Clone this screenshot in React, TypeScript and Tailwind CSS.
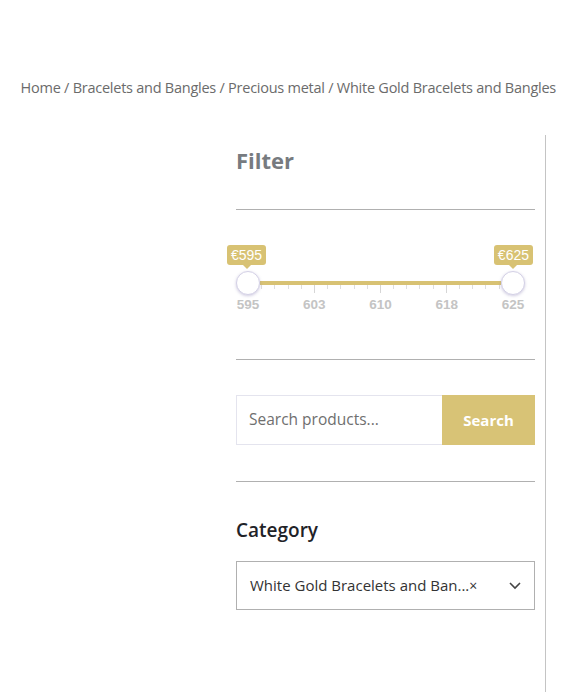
import React from 'react';

const ticks = Array.from({ length: 21 }, (_, i) => i);
const labels = ['595', '603', '610', '618', '625'];

const PriceTip: React.FC<{ value: string }> = ({ value }) => (
  <div className="flex flex-col items-center">
    <div className="bg-[#d8c273] text-white text-[14px] leading-[20px] px-[4px] rounded-[3px]">{value}</div>
    <div className="w-0 h-0 border-l-[4px] border-r-[4px] border-t-[4px] border-l-transparent border-r-transparent border-t-[#d8c273]" />
  </div>
);

const Handle = () => (
  <div className="relative z-10 w-[24px] h-[24px] shrink-0 rounded-full bg-white border border-[#d4d1e6] shadow-[0_1px_3px_rgba(120,110,170,0.35)]" />
);

const App: React.FC = () => {
  return (
    <div className="w-full h-[692px] bg-white overflow-hidden font-['Open_Sans',sans-serif]">
      <div className="pt-[77px] pr-[11px] text-right text-[14.5px] text-[#6b6b6b] tracking-[-0.25px]">
        Home / Bracelets and Bangles / Precious metal / White Gold Bracelets and Bangles
      </div>

      <div className="flex pl-[236px] mt-[36px]">
        <aside className="w-[310px] h-[560px] border-r border-[#c4c4c4] pr-[10px]">
          <h2 className="pt-[10px] text-[22px] font-bold text-[#777b80] leading-[30px]">Filter</h2>
          <div className="mt-[34px] border-t border-[#b0b0b0]" />

          {/* price slider */}
          <div className="mt-[35px] font-['Liberation_Sans',sans-serif]">
            <div className="flex justify-between -ml-[9px] mr-[2px]">
              <PriceTip value="€595" />
              <PriceTip value="€625" />
            </div>
            <div className="mt-[2px] flex items-center w-[289px]">
              <Handle />
              <div className="flex-1 h-[4px] bg-[#d8c273]" />
              <Handle />
            </div>
            <div className="-mt-[10px] mx-[12px] w-[265px] h-[8px] flex justify-between items-start">
              {ticks.map((i) => (
                <div key={i} className={`w-px ${i % 5 === 0 ? 'h-[8px] bg-[#d6d6d6]' : 'h-[4px] bg-[#dedede]'}`} />
              ))}
            </div>
            <div className="mt-[4px] w-[289px] flex justify-between">
              {labels.map((l) => (
                <div key={l} className="w-[24px] text-center text-[13.5px] leading-[16px] font-bold text-[#c4c4c4]">
                  {l}
                </div>
              ))}
            </div>
          </div>

          <div className="mt-[46px] border-t border-[#b0b0b0]" />

          <div className="mt-[35px] flex h-[50px]">
            <div className="flex-1 flex items-center border border-[#e4e4ee] border-r-0 px-[12px] text-[15.5px] text-[#6f6f6f]">
              Search products...
            </div>
            <button className="w-[93px] bg-[#d8c376] text-white text-[15px] font-bold">Search</button>
          </div>

          <div className="mt-[36px] border-t border-[#b0b0b0]" />

          <h3 className="mt-[34px] text-[19px] font-semibold text-[#1f2328] leading-[28px]">Category</h3>
          <div className="mt-[17px] h-[49px] border border-[#b0b0b0] flex items-center pl-[13px] pr-[12px] text-[15px] text-[#333]">
            <span className="flex-1">
              White Gold Bracelets and Ban...<span className="text-[14px]">×</span>
            </span>
            <svg width="14" height="14" viewBox="0 0 14 14" fill="none" stroke="#444" strokeWidth="1.6">
              <path d="M2 5l5 5 5-5" />
            </svg>
          </div>
        </aside>
      </div>
    </div>
  );
};

export default App;
